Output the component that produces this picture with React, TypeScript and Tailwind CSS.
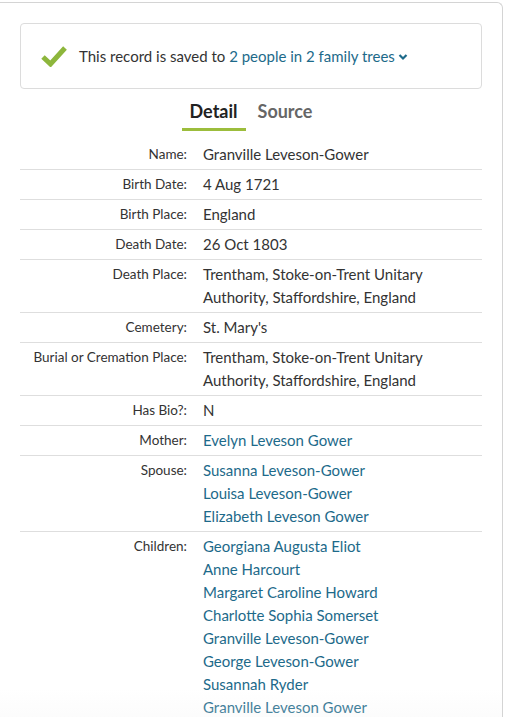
import { useState } from 'react';

type Row = { label: string; values: string[]; link?: boolean };

const rows: Row[] = [
  { label: 'Name:', values: ['Granville Leveson-Gower'] },
  { label: 'Birth Date:', values: ['4 Aug 1721'] },
  { label: 'Birth Place:', values: ['England'] },
  { label: 'Death Date:', values: ['26 Oct 1803'] },
  { label: 'Death Place:', values: ['Trentham, Stoke-on-Trent Unitary Authority, Staffordshire, England'] },
  { label: 'Cemetery:', values: ["St. Mary's"] },
  { label: 'Burial or Cremation Place:', values: ['Trentham, Stoke-on-Trent Unitary Authority, Staffordshire, England'] },
  { label: 'Has Bio?:', values: ['N'] },
  { label: 'Mother:', values: ['Evelyn Leveson Gower'], link: true },
  {
    label: 'Spouse:',
    values: ['Susanna Leveson-Gower', 'Louisa Leveson-Gower', 'Elizabeth Leveson Gower'],
    link: true,
  },
  {
    label: 'Children:',
    values: [
      'Georgiana Augusta Eliot',
      'Anne Harcourt',
      'Margaret Caroline Howard',
      'Charlotte Sophia Somerset',
      'Granville Leveson-Gower',
      'George Leveson-Gower',
      'Susannah Ryder',
      'Granville Leveson Gower',
    ],
    link: true,
  },
];

export default function App() {
  const [tab, setTab] = useState<'detail' | 'source'>('detail');

  return (
    <div
      className="relative w-[506px] h-[717px] overflow-hidden bg-white pt-[2px] pr-[3px] text-[#333]"
      style={{ fontFamily: 'Lato, "Open Sans", Arial, sans-serif' }}
    >
      <div className="-ml-px h-[760px] border-t border-r border-l border-[#d4d4d4] rounded-tr-[6px] px-5 pt-5">
        {/* saved banner */}
        <div className="flex h-[66px] items-center rounded-[4px] border border-[#dcdcdc] pl-5">
          <svg width="26" height="22" viewBox="0 0 26 22" className="shrink-0">
            <path d="M2 12 L9.5 19 L24 3" fill="none" stroke="#8db63c" strokeWidth="5" strokeLinejoin="miter" />
          </svg>
          <p className="ml-[12px] text-[15px]">
            This record is saved to{' '}
            <a className="text-[#1d6a8a] cursor-pointer">
              2 people in 2 family trees
              <svg width="10" height="8" viewBox="0 0 10 8" className="ml-[3px] inline-block align-[1px]">
                <path d="M1.5 2 L5 5.5 L8.5 2" fill="none" stroke="#1d6a8a" strokeWidth="2.2" />
              </svg>
            </a>
          </p>
        </div>

        {/* tabs */}
        <div className="mt-[10px] flex justify-center gap-[4px]">
          <button
            onClick={() => setTab('detail')}
            className={`px-2 pb-[5px] text-[18px] leading-[24px] font-bold border-b-[3px] ${
              tab === 'detail' ? 'border-[#9cbd3c] text-[#222]' : 'border-transparent text-[#666]'
            }`}
          >
            Detail
          </button>
          <button
            onClick={() => setTab('source')}
            className={`px-2 pb-[5px] text-[18px] leading-[24px] font-bold border-b-[3px] ${
              tab === 'source' ? 'border-[#9cbd3c] text-[#222]' : 'border-transparent text-[#666]'
            }`}
          >
            Source
          </button>
        </div>

        {/* table */}
        <div className="mt-[9px]">
          {rows.map((r, i) => (
            <div
              key={r.label}
              className={`flex gap-4 py-[3px] ${i < rows.length - 1 ? 'border-b border-[#dedede]' : ''}`}
            >
              <div className="w-[167px] shrink-0 text-right text-[13.5px] leading-[23px] text-[#333]">
                {r.label}
              </div>
              <div className="flex-1 pr-6 text-[15px] leading-[23px]">
                {r.values.map((v, j) => (
                  <div key={j} className={r.link ? 'text-[#1d6a8a]' : 'text-[#333]'}>
                    {v}
                  </div>
                ))}
              </div>
            </div>
          ))}
        </div>
      </div>
      <div className="pointer-events-none absolute bottom-0 left-0 right-[4px] h-[28px] bg-gradient-to-b from-transparent to-[#f2f2f2]/25" />
    </div>
  );
}
